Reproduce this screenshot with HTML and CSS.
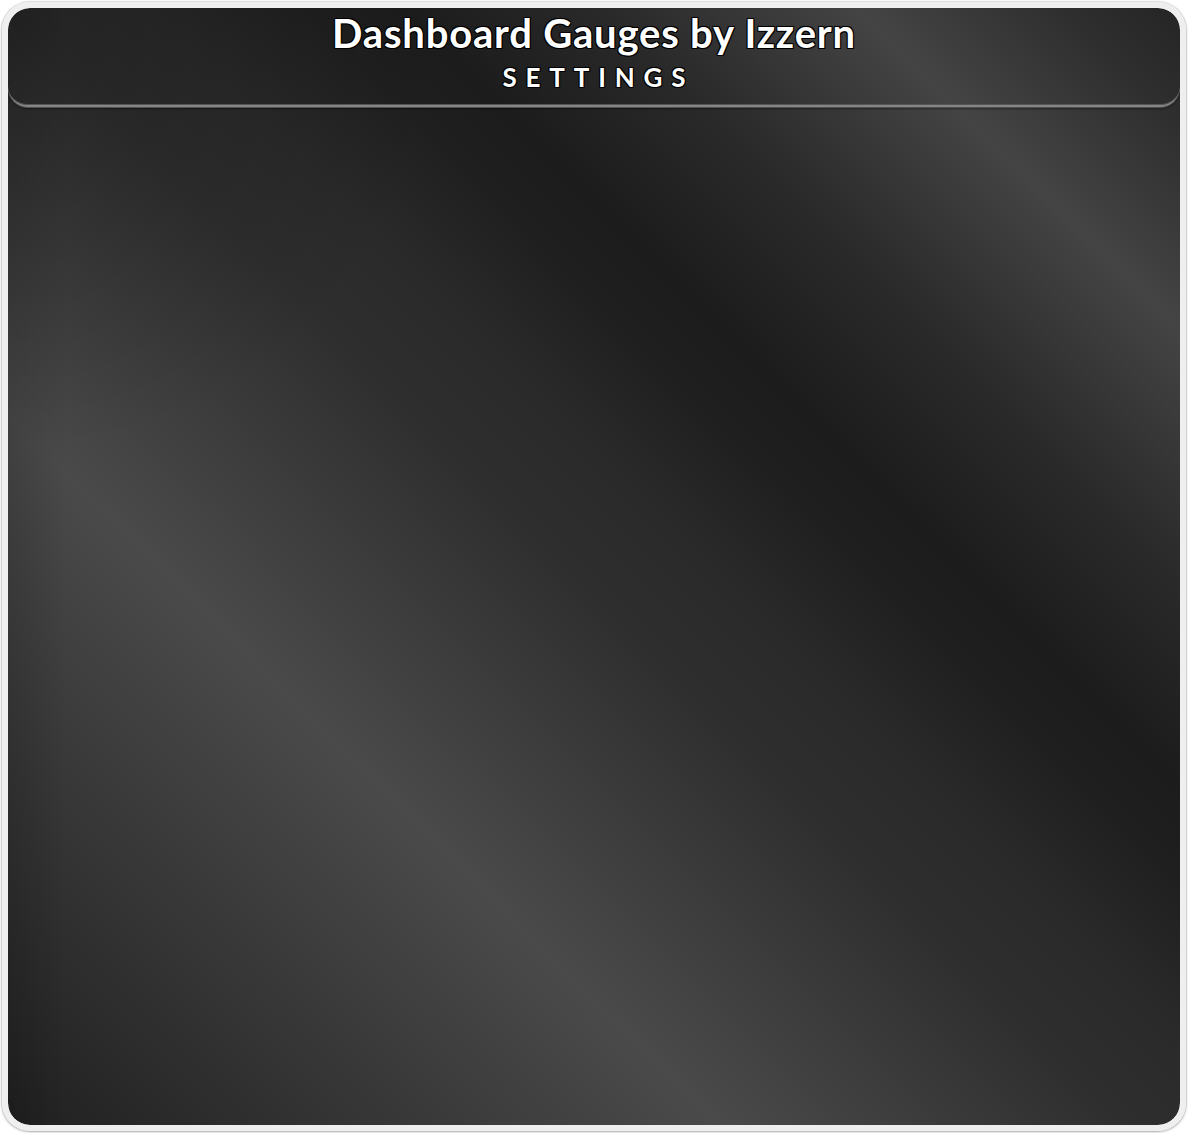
FILE: index.html
```html
<!DOCTYPE html>
<html lang="en">
<head>
<meta charset="utf-8">
<title>Dashboard Gauges by Izzern - Settings</title>
<link rel="stylesheet" href="styles.css">
</head>
<body>
<div class="frame">
  <div class="panel">
    <header class="header">
      <h1 class="title">Dashboard Gauges by Izzern</h1>
      <div class="subtitle">SETTINGS</div>
    </header>
    <main class="content"></main>
  </div>
</div>
</body>
</html>
```

FILE: styles.css
```css
html, body {
  margin: 0;
  padding: 0;
  background: #ffffff;
}

body {
  width: 1188px;
  height: 1133px;
  overflow: hidden;
}

.frame {
  box-sizing: border-box;
  margin: 2px;
  width: 1184px;
  height: 1129px;
  border: 6px solid #efefef;
  border-radius: 28px;
  box-shadow: 0 0 2px rgba(0, 0, 0, 0.35), 0 1px 3px rgba(0, 0, 0, 0.25), inset 0 0 1px rgba(0, 0, 0, 0.4);
  overflow: hidden;
}

.panel {
  height: 100%;
  border-radius: 22px;
  overflow: hidden;
  display: flex;
  flex-direction: column;
  background:
    radial-gradient(ellipse 450px 450px at 0% 0%, rgba(0,0,0,0.22), rgba(0,0,0,0) 100%),
    linear-gradient(90deg, rgba(0,0,0,0.12) 0px, rgba(0,0,0,0) 60px),
    linear-gradient(45deg, #202020 0%, #4a4a4a 31%, #363636 44%, #2e2e2e 49%, #2a2a2a 55%, #1f1f1f 62%, #1c1c1c 66%, #2a2a2a 75%, #444444 86%, #2e2e2e 95%, #252525 100%);
}

.header {
  flex: 0 0 auto;
  box-sizing: border-box;
  height: 99px;
  border-bottom: 2px solid #858585;
  border-radius: 0 0 20px 20px;
  box-shadow: inset 0 -1px 0 #555555, 0 1px 0 #505050, 0 2px 2px rgba(0, 0, 0, 0.4);
  display: flex;
  flex-direction: column;
  align-items: center;
  padding-top: 0;
}

.title {
  margin: 0;
  font-family: "Lato", "Open Sans", sans-serif;
  font-weight: 700;
  font-size: 40px;
  line-height: 50px;
  letter-spacing: 0.8px;
  color: #ffffff;
  text-shadow: 1px 1px 0 #000, -1px -1px 0 #000, 1px -1px 0 #000, -1px 1px 0 #000, 0 0 2px #000;
}

.subtitle {
  margin-top: 3px;
  font-family: "Lato", "Open Sans", sans-serif;
  font-weight: 700;
  font-size: 26px;
  line-height: 32px;
  letter-spacing: 8.8px;
  margin-right: -8.8px;
  color: #ffffff;
  text-shadow: 1px 1px 0 #000, -1px -1px 0 #000, 1px -1px 0 #000, -1px 1px 0 #000, 0 0 2px #000;
}

.content {
  flex: 1 1 auto;
}
```
